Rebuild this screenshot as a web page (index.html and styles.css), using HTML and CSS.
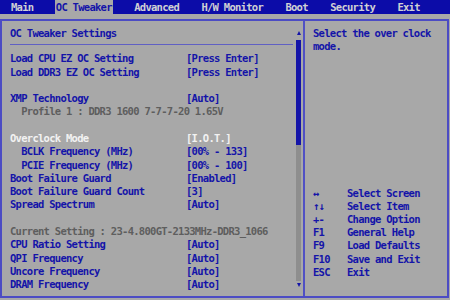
FILE: index.html
```html
<!DOCTYPE html>
<html>
<head>
<meta charset="utf-8">
<link rel="stylesheet" href="styles.css">
</head>
<body>
<div class="tabs">
  <span class="tab">Main</span>
  <span class="tab active">OC Tweaker</span>
  <span class="tab">Advanced</span>
  <span class="tab">H/W Monitor</span>
  <span class="tab">Boot</span>
  <span class="tab">Security</span>
  <span class="tab">Exit</span>
</div>
<div class="frame">
  <div class="main">
    <div class="content">
      <div class="title">OC Tweaker Settings</div>
      <div class="sep"></div>
      <div class="rows">
        <div class="row"><span>Load CPU EZ OC Setting</span><span>[Press Enter]</span></div>
        <div class="row"><span>Load DDR3 EZ OC Setting</span><span>[Press Enter]</span></div>
        <div class="row blank"></div>
        <div class="row"><span>XMP Technology</span><span>[Auto]</span></div>
        <div class="row grey"><span class="ind wide">Profile 1 : DDR3 1600 7-7-7-20 1.65V</span></div>
        <div class="row blank"></div>
        <div class="row sel"><span>Overclock Mode</span><span>[I.O.T.]</span></div>
        <div class="row"><span class="ind">BCLK Frequency (MHz)</span><span>[00% - 133]</span></div>
        <div class="row"><span class="ind">PCIE Frequency (MHz)</span><span>[00% - 100]</span></div>
        <div class="row"><span>Boot Failure Guard</span><span>[Enabled]</span></div>
        <div class="row"><span>Boot Failure Guard Count</span><span>[3]</span></div>
        <div class="row"><span>Spread Spectrum</span><span>[Auto]</span></div>
        <div class="row blank"></div>
        <div class="row grey"><span class="wide">Current Setting : 23-4.800GT-2133MHz-DDR3_1066</span></div>
        <div class="row"><span>CPU Ratio Setting</span><span>[Auto]</span></div>
        <div class="row"><span>QPI Frequency</span><span>[Auto]</span></div>
        <div class="row"><span>Uncore Frequency</span><span>[Auto]</span></div>
        <div class="row"><span>DRAM Frequency</span><span>[Auto]</span></div>
      </div>
    </div>
    <div class="scroll">
      <div class="arrow up"></div>
      <div class="track"><div class="thumb"></div></div>
      <div class="arrow down"></div>
    </div>
  </div>
  <div class="side">
    <div class="desc">Select the over clock<br>mode.</div>
    <div class="help">
      <div class="hrow"><span class="key">↔</span><span>Select Screen</span></div>
      <div class="hrow"><span class="key">↑↓</span><span>Select Item</span></div>
      <div class="hrow"><span class="key">+-</span><span>Change Option</span></div>
      <div class="hrow"><span class="key">F1</span><span>General Help</span></div>
      <div class="hrow"><span class="key">F9</span><span>Load Defaults</span></div>
      <div class="hrow"><span class="key">F10</span><span>Save and Exit</span></div>
      <div class="hrow"><span class="key">ESC</span><span>Exit</span></div>
    </div>
  </div>
</div>
</body>
</html>
```

FILE: styles.css
```css
* { box-sizing: border-box; }
html, body {
  margin: 0;
  padding: 0;
  width: 450px;
  height: 300px;
  overflow: hidden;
}
body {
  background: #a8a8a8;
  font-family: "DejaVu Sans Mono", "Liberation Mono", monospace;
  font-weight: bold;
  font-size: 10.5px;
  letter-spacing: -0.72px;
  color: #1414a8;
}
.tabs {
  height: 14px;
  background: #0c0ca8;
  display: flex;
  gap: 20.4px;
  padding-left: 10px;
  line-height: 14px;
}
.tab {
  color: #d0d0d4;
  padding: 0 1px;
  white-space: nowrap;
}
.tab.active {
  background: #a8a8a8;
  color: #1414a8;
}
.frame {
  margin-top: 5px;
  width: 449px;
  height: 279px;
  border: 2px solid #4c4cc4;
  display: flex;
}
.main {
  width: 303px;
  display: flex;
  border-right: 2px solid #5050c4;
}
.content {
  flex: 1;
  padding: 6px 3px 0 8px;
}
.title {
  line-height: 13.3px;
}
.sep {
  margin-top: 4px;
  height: 1px;
  background: #6060c4;
}
.rows {
  margin-top: 7px;
}
.row {
  display: grid;
  grid-template-columns: 176px 1fr;
  height: 13.29px;
  line-height: 13.29px;
  white-space: nowrap;
}
.row .ind { padding-left: 11.2px; }
.row .wide { grid-column: 1 / 3; }
.row.grey { color: #5e5e5e; }
.row.sel { color: #f2f2f2; }
.scroll {
  width: 5px;
  margin-right: 2px;
  padding: 10px 0 9px;
  display: flex;
  flex-direction: column;
  align-items: center;
}
.arrow {
  width: 0;
  height: 0;
  border-left: 2.5px solid transparent;
  border-right: 2.5px solid transparent;
}
.arrow.up { border-bottom: 4px solid #1414a8; }
.arrow.down { border-top: 4px solid #1414a8; }
.track {
  flex: 1;
  width: 5px;
  margin: 5px 0 2px;
  background: #8e8e8e;
}
.thumb {
  height: 105px;
  background: #1414a8;
}
.side {
  flex: 1;
  display: flex;
  flex-direction: column;
  padding: 6px 0 17px 8px;
}
.desc {
  line-height: 13.3px;
}
.help {
  margin-top: auto;
}
.hrow {
  display: flex;
  height: 13.2px;
  line-height: 13.2px;
  white-space: nowrap;
}
.key {
  width: 34px;
}
```
